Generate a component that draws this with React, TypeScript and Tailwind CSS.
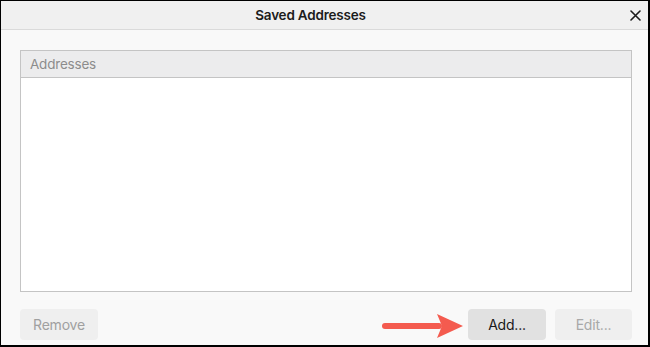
export default function App() {
  return (
    <div
      className="relative w-[650px] h-[347px] border-t border-l border-r-2 border-b-2 border-black bg-[#f9f9f9] flex flex-col"
      style={{ fontFamily: 'Inter, "Liberation Sans", sans-serif' }}
    >
      {/* Title bar */}
      <div className="relative h-[29px] shrink-0 bg-[#f0f0f0] border-b border-[#dadada] flex items-center justify-center pr-[28px]">
        <span className="text-[13.5px] font-semibold tracking-[-0.2px] text-[#1c1c1c]">Saved Addresses</span>
        <svg
          className="absolute right-[7px] top-[9px]"
          width="11"
          height="11"
          viewBox="0 0 11 11"
          fill="none"
          stroke="#1a1a1a"
          strokeWidth="1.6"
          strokeLinecap="round"
        >
          <path d="M1 1 L10 10 M10 1 L1 10" />
        </svg>
      </div>

      {/* Body */}
      <div className="flex flex-col pl-[19px] pr-[16px] pt-[20px]">
        <div className="h-[242px] border border-[#c4c4c4] bg-white flex flex-col">
          <div className="h-[27px] shrink-0 bg-[#ececed] border-b border-[#c4c4c4] flex items-center pl-[9px]">
            <span className="text-[13.5px] tracking-[-0.2px] text-[#8c8c8c]">Addresses</span>
          </div>
          <div className="flex-1" />
        </div>

        <div className="mt-[17px] flex items-center">
          <button className="w-[78px] h-[31px] rounded-[4px] bg-[#efefef] text-[14px] tracking-[-0.2px] text-[#a0a0a0]">
            Remove
          </button>
          <div className="flex-1" />
          <button className="w-[78px] h-[31px] rounded-[4px] bg-[#e1e1e1] text-[14px] tracking-[-0.2px] text-[#1a1a1a]">
            Add...
          </button>
          <button className="ml-[9px] w-[77px] h-[31px] rounded-[4px] bg-[#efefef] text-[14px] tracking-[-0.2px] text-[#a8a8a8]">
            Edit...
          </button>
        </div>
      </div>

      {/* Annotation arrow */}
      <svg
        className="absolute left-[378px] top-[310px]"
        width="88"
        height="30"
        viewBox="0 0 88 30"
        fill="#f45b4f"
      >
        <rect x="3" y="12" width="60" height="6" rx="3" />
        <path d="M58 3 L84 15 L58 27 L63 15 Z" />
      </svg>
    </div>
  );
}
